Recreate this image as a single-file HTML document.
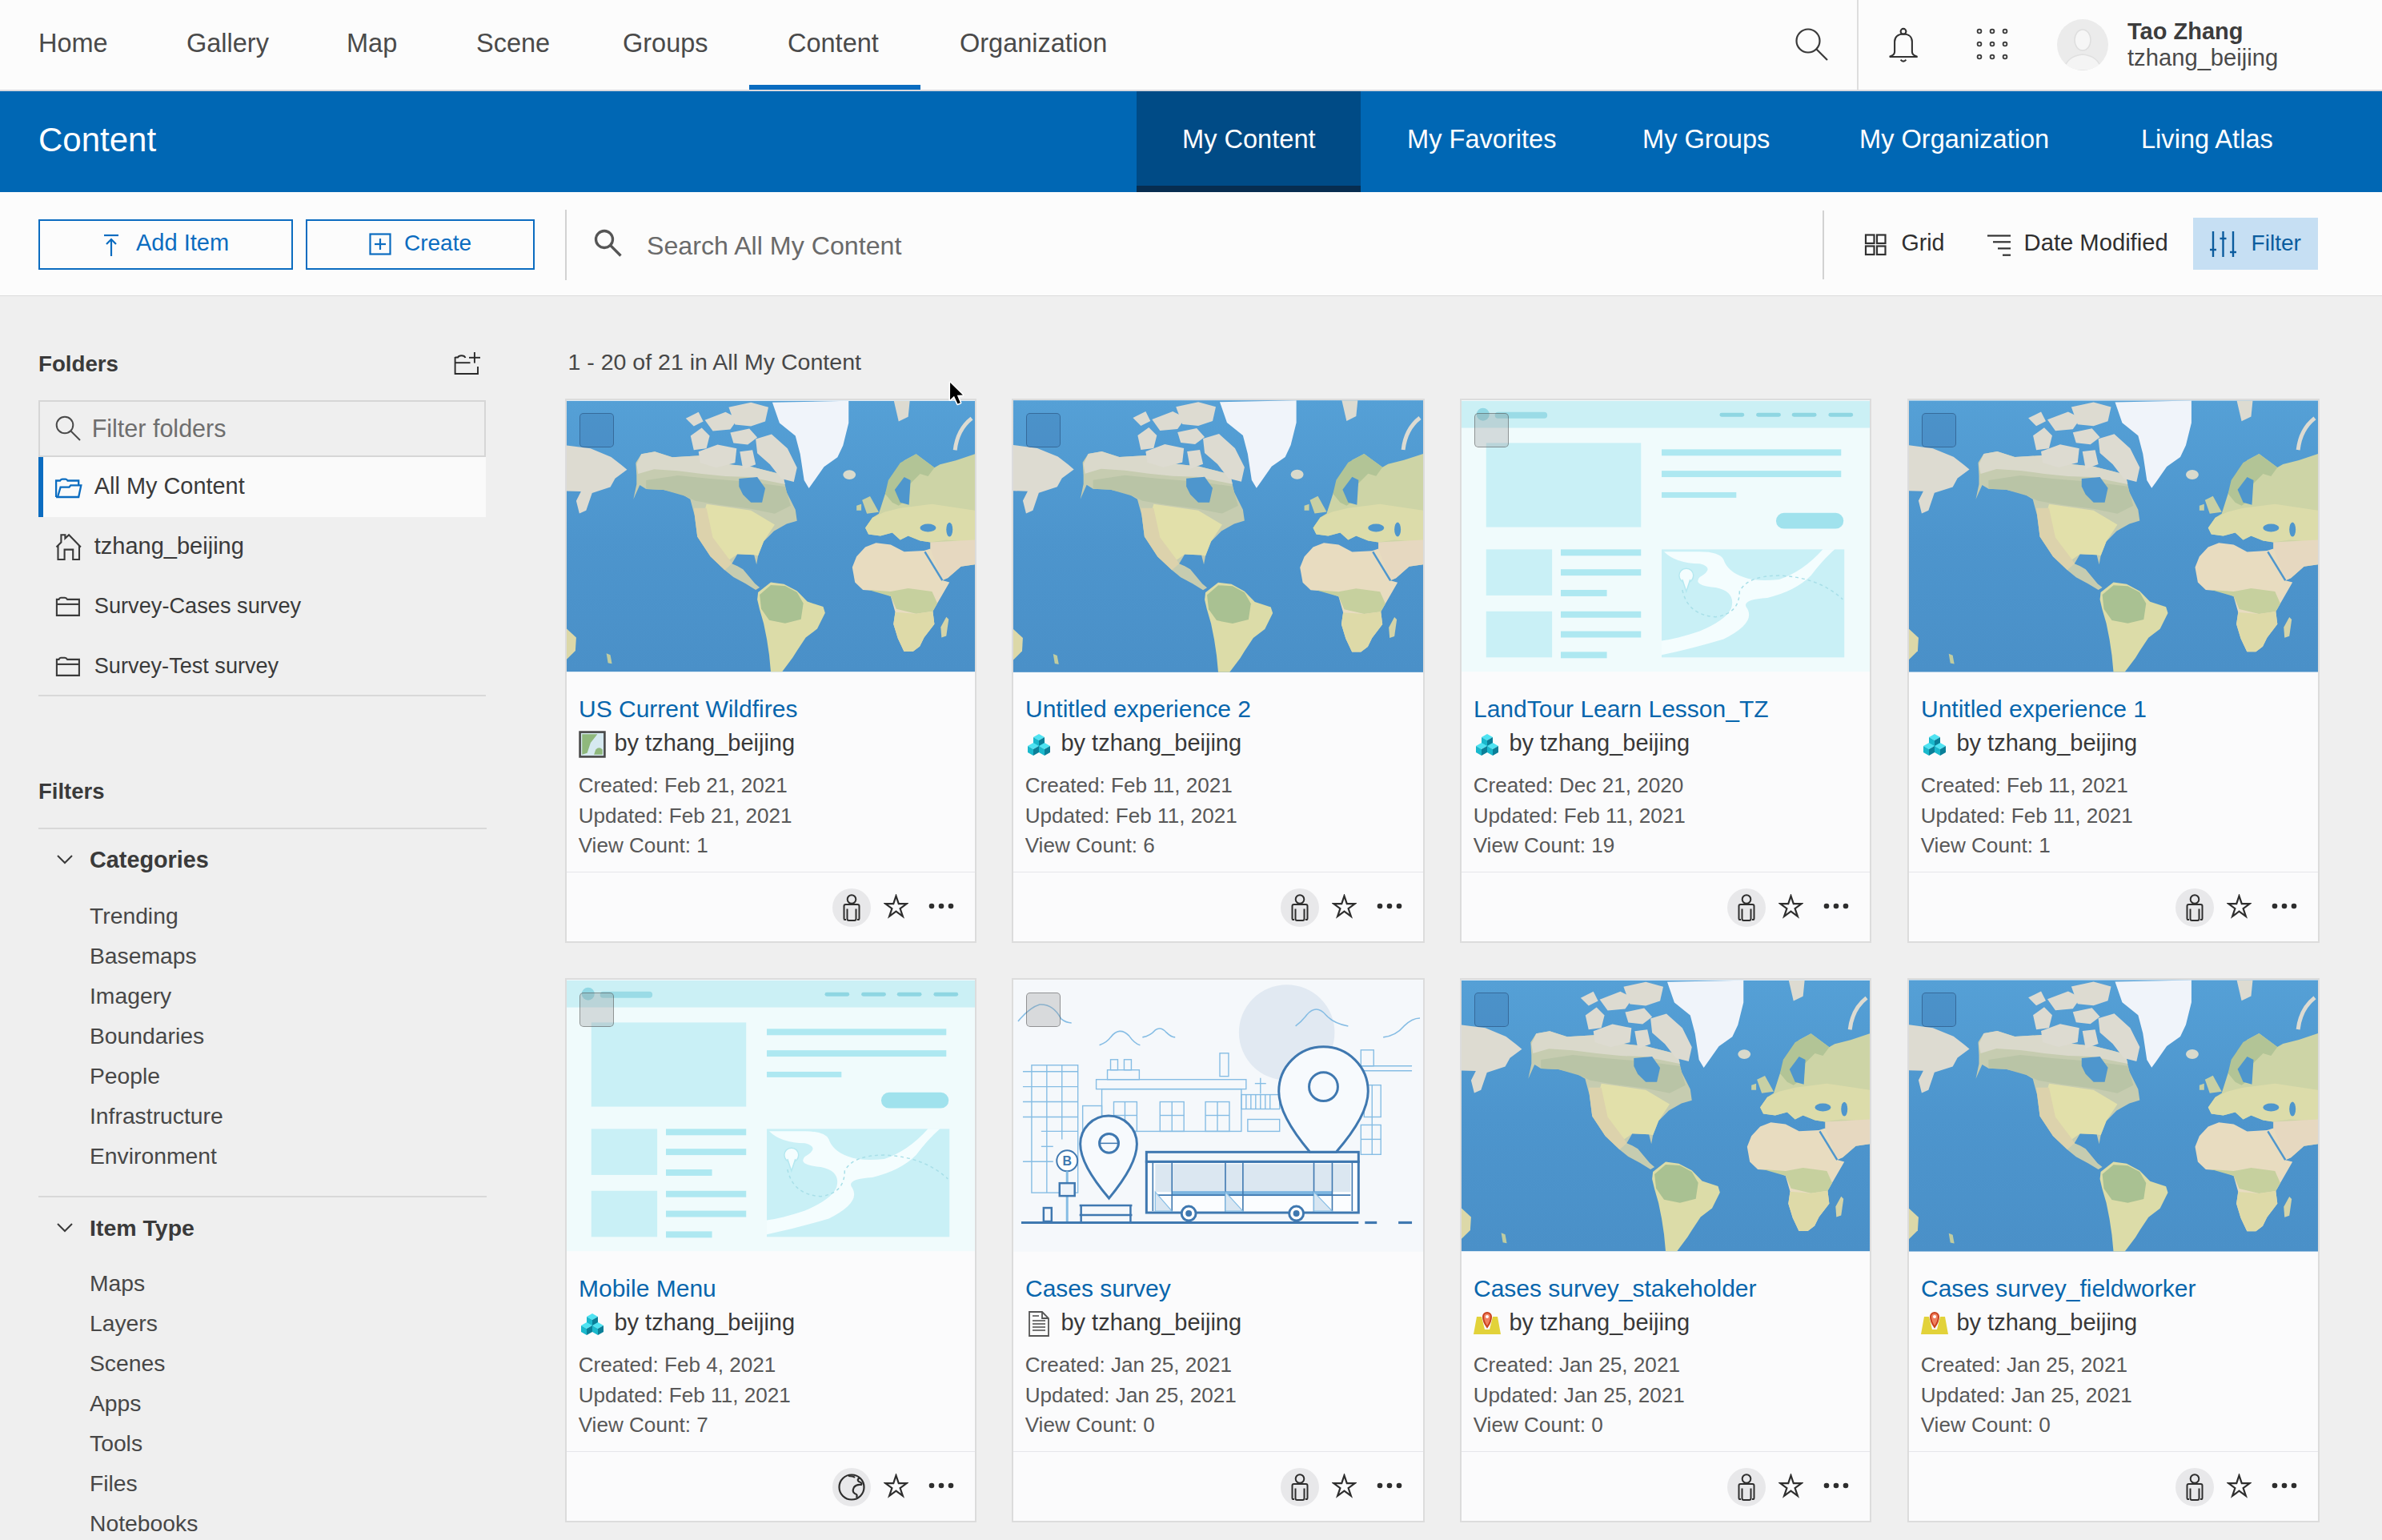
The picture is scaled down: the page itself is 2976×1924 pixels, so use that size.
<!DOCTYPE html>
<html><head><meta charset="utf-8"><style>
html,body{margin:0;padding:0}
body{width:2976px;height:1924px;overflow:hidden;position:relative;background:#efefef;font-family:"Liberation Sans", sans-serif}
.t{position:absolute;white-space:nowrap;line-height:1}
svg{overflow:visible}
</style></head><body>
<svg width="0" height="0" style="position:absolute"><defs>
<symbol id="world" viewBox="0 0 514 341">
<defs><linearGradient id="oc" x1="0" y1="0" x2="0" y2="1"><stop offset="0" stop-color="#55a0d6"/><stop offset="0.5" stop-color="#4d95cd"/><stop offset="1" stop-color="#4a90c8"/></linearGradient></defs><rect width="514" height="341" fill="url(#oc)"/>
<polygon fill="#c6ccb0" points="87,78 94,67 111,64 133,71 167,69 178,73 205,80 233,83 257,89 272,93 277,115 288,137 290,151 277,155 261,164 248,177 241,195 239,206 236,194 215,193 208,205 215,208 222,212 237,230 243,235 238,238 225,230 210,222 199,213 181,196 164.5,171 161,144 155.6,124 144,117 122,112 100,111 92,106 84,124 88,105 88,94"/>
<polygon fill="#dad9cb" points="94,67 111,64 133,71 167,69 178,73 205,80 233,83 257,89 272,93 275,105 250,100 230,96 200,95 170,92 140,88 110,86 90,92 88,80"/>
<polygon fill="#b9c4a6" points="100,100 140,94 180,98 230,102 275,108 282,132 262,142 232,136 192,131 162,126 150,120 122,112 100,111"/>
<polygon fill="#e2e0aa" points="176,130 232,138 262,156 248,177 241,195 236,194 215,193 205,200 186,185 170,152"/>
<polygon fill="#dcd2ac" points="160,135 176,135 184,172 205,200 208,205 199,213 181,196 164.5,171"/>
<polygon fill="#4e96cd" points="217,98 240,96 250,110 246,128 232,128 222,118 217,108"/>
<g fill="#dddbd1">
<polygon points="156,44 170,34 180,44 176,60 160,62"/>
<polygon points="166,64 190,55 214,60 212,78 188,84 168,78"/>
<polygon points="174,24 200,14 216,22 206,36 184,38"/>
<polygon points="204,8 232,2 254,8 250,26 232,32 212,30"/>
<polygon points="206,40 230,35 240,46 228,55 210,53"/>
<polygon points="238,48 258,42 278,60 290,84 286,102 270,98 256,80 240,66"/>
<polygon points="218,64 234,62 238,80 222,86"/>
<polygon points="150,22 166,14 172,26 160,32"/>
<polygon points="0,56 30,60 56,70.6 68.7,80.5 76,86.6 61,97.6 55,108.6 32,116 24.5,138 16,141.8 12,125.8 18,114 0,113.5"/>
<polygon points="412,0 432,0 430,20 418,26"/>
</g>
<path d="M510 22 Q492 36 489 62" fill="none" stroke="#dddbd1" stroke-width="5"/>
<polygon fill="#f0f4fa" points="259,2 355,0 355,28 348,56 341,71 324,83 310,103 305,110 299,100 294,67 288,44 268,28"/>
<ellipse cx="356" cy="93" rx="8" ry="6" fill="#d9dacc"/>
<polygon fill="#cdd4a6" points="514,206 496.5,208.5 480,223 473,226 458,190 458,178 445,176 430,170 420,175 410,166 395,170 380,168 376,160 385,147 393,142 401,117 410,95 425,75 440,67 463,84 470,80 490,75 514,67"/>
<polygon fill="#b2c496" points="401,117 405,100 420,78 440,67 463,84 455,95 445,92 432,105 428,125 418,132 410,128"/>
<polygon fill="#4e96cd" points="413,112 425,96 433,100 431,131 420,128"/>
<polygon fill="#dcdcaa" points="385,147 400,140 420,135 460,130 514,138 514,178 478,175 458,178 445,176 430,170 420,175 410,166 395,170 380,168 376,160"/>
<polygon fill="#e6d8c0" points="458,178 514,175 514,206 496.5,208.5 480,223 473,226 458,190"/>
<ellipse cx="455" cy="160" rx="10" ry="5" fill="#4e96cd"/>
<ellipse cx="482" cy="162" rx="4" ry="9" fill="#4e96cd"/>
<polygon fill="#c8d0a4" points="372,125 382,120 393,140 378,142"/>
<polygon fill="#c8d0a4" points="365,132 371,130 371,138 365,138"/>
<polygon fill="#e8dcc0" points="359.6,209.6 365,196 376,184 389.5,178.7 408,181 425,190 450,188.7 458,186 473,226 482,228.4 466.7,255 461,265 463,281 450,298 444.6,309 436,315.6 424.8,315.6 417,299 411.5,281 413.7,266 408,246 391.7,239.4 373,238 363,228.4"/>
<polygon fill="#c6d09e" points="380,238 408,240 430,236 460,240 466.7,255 461,265 440,268 415,262 408,246"/>
<polygon fill="#dedaa8" points="413.7,266 440,268 461,265 463,281 450,298 444.6,309 436,315.6 424.8,315.6 417,299 411.5,281"/>
<line x1="451" y1="190" x2="473" y2="226" stroke="#4e96cd" stroke-width="2.5"/>
<polygon fill="#d4d4a8" points="471,285 478,272 481,275 478,296 472,298"/>
<polygon fill="#dcdca8" points="241,241 257,228.4 273.6,230.6 290,239.4 303,252.7 323,259.3 325.4,267 315.5,287 301,298 290,314.5 284.6,323.3 271.3,341 257,341 255,320 252,300 248,280 242.8,262 240,250"/>
<polygon fill="#a9c192" points="243,244 257,232 275,233 290,241 298,255 295,275 275,280 255,276 245,262"/>
<polygon fill="#dcd8a8" points="0,287 12,298 11,314.5 0,325.5"/>
<polygon fill="#c0cca0" points="50,318 55,320 57,331 52,330"/>
</symbol>

<symbol id="exp" viewBox="0 0 514 341">
<rect width="514" height="341" fill="#f0fbfc"/>
<rect width="514" height="34" fill="#cbf0f5"/>
<circle cx="27" cy="17" r="8" fill="#92d8e4"/>
<rect x="42" y="14" width="66" height="8" rx="4" fill="#9adbe6"/>
<g fill="#8fd6e2"><rect x="325" y="15" width="31" height="5" rx="2.5"/><rect x="371" y="15" width="31" height="5" rx="2.5"/><rect x="416" y="15" width="31" height="5" rx="2.5"/><rect x="462" y="15" width="31" height="5" rx="2.5"/></g>
<g fill="#c9f0f6"><rect x="31" y="53" width="195" height="106"/><rect x="31" y="187" width="83" height="58"/><rect x="31" y="265" width="83" height="58"/><rect x="252" y="187" width="230" height="136"/></g>
<g fill="#aee8f1"><rect x="252" y="61" width="226" height="8"/><rect x="252" y="88" width="226" height="8"/><rect x="252" y="115" width="94" height="7"/>
<rect x="125" y="187" width="101" height="8"/><rect x="125" y="212" width="101" height="8"/><rect x="125" y="238" width="58" height="8"/><rect x="125" y="265" width="101" height="8"/><rect x="125" y="290" width="101" height="8"/><rect x="125" y="316" width="58" height="8"/></g>
<rect x="396" y="141" width="85" height="20" rx="10" fill="#a0e2ed"/>
<path d="M255 190 Q270 205 300 205 Q320 210 300 222 Q290 232 320 235 Q345 240 340 260 Q335 275 300 290 Q270 300 252 302 L252 320 Q290 312 330 300 Q370 280 360 262 Q350 250 385 248 Q420 240 440 220 Q455 200 470 187 L455 187 Q430 215 400 225 Q370 228 355 222 Q335 215 330 200 Q325 190 300 190 Z" fill="#f4fdfe"/>
<circle cx="283" cy="220" r="9" fill="#f4fdfe" stroke="#b4e8f0" stroke-width="1.5"/>
<path d="M278 225 L283 240 L288 225" fill="#f4fdfe" stroke="#b4e8f0" stroke-width="1.5"/>
<path d="M278 238 Q285 270 320 272 Q350 268 350 240 Q360 220 400 220 Q450 222 480 250" fill="none" stroke="#a8dfe8" stroke-width="1.5" stroke-dasharray="4 4"/>
</symbol>

<symbol id="surv" viewBox="0 0 514 341">
<rect width="514" height="341" fill="#f5f8fb"/>
<circle cx="343" cy="66" r="60" fill="#e1e9f2"/>
<g fill="none" stroke="#86bde4" stroke-width="1.6">
<path d="M6 52 Q20 35 33 31 Q50 30 60 49 Q66 54 73 54"/>
<path d="M108 82 Q118 78 122 72 Q133 58 145 70 Q152 80 159 82"/>
<path d="M162 72 Q172 70 178 63 Q185 58 192 66 Q198 72 203 72"/>
<path d="M354 58 Q362 52 368 44 Q380 30 392 44 Q402 55 420 58"/>
<path d="M464 72 Q480 70 490 58 Q500 48 510 48"/>
</g>
<g fill="none" stroke="#86bde4" stroke-width="1.4">
<rect x="23" y="107" width="58" height="160"/>
<line x1="42" y1="107" x2="42" y2="267"/><line x1="61" y1="107" x2="61" y2="200"/>
<line x1="12" y1="115" x2="81" y2="115"/><line x1="12" y1="134" x2="81" y2="134"/><line x1="12" y1="153" x2="81" y2="153"/><line x1="12" y1="172" x2="81" y2="172"/><line x1="35" y1="190" x2="81" y2="190"/><line x1="35" y1="209" x2="50" y2="209"/><line x1="12" y1="228" x2="50" y2="228"/>
<rect x="104" y="125" width="188" height="12"/>
<rect x="111" y="137" width="175" height="53"/>
<rect x="118" y="113" width="40" height="12"/>
<rect x="126" y="153" width="29" height="37"/><rect x="184" y="153" width="30" height="37"/><rect x="241" y="153" width="30" height="37"/>
<line x1="140" y1="153" x2="140" y2="190"/><line x1="199" y1="153" x2="199" y2="190"/><line x1="256" y1="153" x2="256" y2="190"/>
<line x1="126" y1="170" x2="155" y2="170"/><line x1="184" y1="170" x2="214" y2="170"/><line x1="241" y1="170" x2="271" y2="170"/>
<rect x="122" y="100" width="9" height="13"/><rect x="139" y="100" width="9" height="13"/><rect x="259" y="92" width="11" height="29"/>
<rect x="87" y="158" width="24" height="32"/>
<rect x="286" y="144" width="48" height="18"/><line x1="292" y1="144" x2="292" y2="162"/><line x1="298" y1="144" x2="298" y2="162"/><line x1="304" y1="144" x2="304" y2="162"/><line x1="310" y1="144" x2="310" y2="162"/><line x1="316" y1="144" x2="316" y2="162"/><line x1="322" y1="144" x2="322" y2="162"/>
<rect x="294" y="175" width="40" height="15"/><line x1="310" y1="123" x2="310" y2="143"/><line x1="303" y1="130" x2="317" y2="130"/>
<rect x="436" y="88" width="16" height="20"/><line x1="436" y1="108" x2="500" y2="108"/><line x1="436" y1="114" x2="500" y2="114"/>
<rect x="440" y="132" width="21" height="40"/><rect x="436" y="182" width="25" height="37"/><line x1="450" y1="132" x2="450" y2="219"/><line x1="436" y1="200" x2="461" y2="200"/>
</g>
<rect x="167" y="228" width="266" height="64" fill="#fbfdff" stroke="#3f78b0" stroke-width="3"/>
<rect x="178" y="231" width="245" height="35" fill="#dbe7f1"/><rect x="199" y="265" width="201" height="6" fill="#7db5e0"/>
<rect x="167" y="216" width="266" height="12" fill="#f4f8fb" stroke="#3f78b0" stroke-width="3"/>
<g stroke="#3f78b0" stroke-width="1.6" fill="none"><line x1="199" y1="228" x2="199" y2="292"/><line x1="266" y1="228" x2="266" y2="292"/><line x1="288" y1="228" x2="288" y2="292"/><line x1="377" y1="228" x2="377" y2="292"/><line x1="400" y1="228" x2="400" y2="292"/><line x1="178" y1="270" x2="423" y2="270"/><line x1="175" y1="228" x2="175" y2="290"/><line x1="425" y1="228" x2="425" y2="290"/></g>
<g fill="#d8e6f2" stroke="#86bde4" stroke-width="1.2"><path d="M178 266 L199 290 L178 290 Z"/><path d="M266 266 L288 290 L266 290 Z"/><path d="M377 266 L400 290 L377 290 Z"/></g>
<g fill="#fff" stroke="#3f78b0" stroke-width="3"><circle cx="220" cy="293" r="9"/><circle cx="355" cy="293" r="9"/></g>
<g fill="#3f78b0"><circle cx="220" cy="293" r="4"/><circle cx="355" cy="293" r="4"/></g>
<path d="M333 140 A56 56 0 0 1 445 140 Q445 170 405 216 L372 216 Q333 170 333 140 Z" fill="#f7fafd" stroke="#3f78b0" stroke-width="3"/>
<circle cx="389" cy="134" r="18" fill="#f7fafd" stroke="#3f78b0" stroke-width="3"/>
<path d="M84 206 A35.5 35.5 0 0 1 155 206 Q155 232 120 274 Q84 232 84 206 Z" fill="#f7fafd" stroke="#3f78b0" stroke-width="3"/>
<circle cx="120" cy="205" r="12" fill="#f7fafd" stroke="#3f78b0" stroke-width="3"/>
<line x1="108" y1="205" x2="132" y2="205" stroke="#3f78b0" stroke-width="1.5"/>
<circle cx="67.5" cy="227" r="13" fill="#fff" stroke="#3f78b0" stroke-width="2"/>
<text x="67.5" y="233" font-family="Liberation Sans" font-weight="bold" font-size="16" fill="#3f78b0" text-anchor="middle">B</text>
<line x1="67.5" y1="240" x2="67.5" y2="303" stroke="#86bde4" stroke-width="3"/>
<rect x="58" y="255" width="19" height="16" fill="#eef4fa" stroke="#3f78b0" stroke-width="2.5"/>
<g stroke="#3f78b0" stroke-width="2.5"><line x1="83" y1="283" x2="149" y2="283"/><line x1="83" y1="295" x2="149" y2="295"/><line x1="85" y1="283" x2="85" y2="303"/><line x1="147" y1="283" x2="147" y2="303"/></g>
<rect x="38" y="286" width="10" height="17" fill="none" stroke="#3f78b0" stroke-width="2.5"/>
<line x1="10" y1="304.5" x2="433" y2="304.5" stroke="#3f78b0" stroke-width="3.2"/>
<g stroke="#3f78b0" stroke-width="3.2"><line x1="441" y1="304.5" x2="456" y2="304.5"/><line x1="483" y1="304.5" x2="500" y2="304.5"/></g>
</symbol>
<symbol id="mapicon" viewBox="0 0 32 32"><rect x="1.5" y="1.5" width="29" height="29" fill="#d6e9f0" stroke="#4a4a4a" stroke-width="2.5"/><path d="M4 4 L22 4 L14 14 L10 26 L4 28 Z" fill="#8fb87c"/><path d="M20 22 Q24 18 28 22 L28 28 L18 28 Z" fill="#8fb87c"/></symbol><symbol id="cubes" viewBox="0 0 34 34">
<g><path d="M10 8 L17 4 L24 8 L17 12 Z" fill="#4fe3f2"/><path d="M10 8 L17 12 L17 20 L10 16 Z" fill="#1ab8cc"/><path d="M24 8 L17 12 L17 20 L24 16 Z" fill="#0a7f98"/></g>
<g transform="translate(-7 11)"><path d="M10 8 L17 4 L24 8 L17 12 Z" fill="#4fe3f2"/><path d="M10 8 L17 12 L17 20 L10 16 Z" fill="#1ab8cc"/><path d="M24 8 L17 12 L17 20 L24 16 Z" fill="#0a7f98"/></g>
<g transform="translate(7 11)"><path d="M10 8 L17 4 L24 8 L17 12 Z" fill="#4fe3f2"/><path d="M10 8 L17 12 L17 20 L10 16 Z" fill="#1ab8cc"/><path d="M24 8 L17 12 L17 20 L24 16 Z" fill="#0a7f98"/></g>
</symbol><symbol id="doc" viewBox="0 0 34 34"><path d="M5 2 L21 2 L29 10 L29 32 L5 32 Z" fill="#fafafa" stroke="#555" stroke-width="1.8"/><path d="M21 2 L21 10 L29 10" fill="none" stroke="#555" stroke-width="1.8"/><g stroke="#555" stroke-width="1.6"><line x1="9" y1="13" x2="25" y2="13"/><line x1="9" y1="17" x2="25" y2="17"/><line x1="9" y1="21" x2="25" y2="21"/><line x1="9" y1="25" x2="25" y2="25"/><line x1="9" y1="7" x2="17" y2="7"/></g></symbol><symbol id="survicon" viewBox="0 0 34 34"><path d="M4 8 L10 8 L14 24 L20 24 L24 8 L30 8 L34 30 L0 30 Z" fill="#e2d23a"/><path d="M12 8 A5 5 0 0 1 22 8 Q22 14 17 21 Q12 14 12 8 Z" fill="#f08060" stroke="#c8401c" stroke-width="2"/><circle cx="17" cy="8" r="2" fill="#fff"/></symbol><symbol id="person" viewBox="0 0 48 48"><circle cx="24" cy="24" r="24" fill="#e8e8ea"/><g fill="none" stroke="#2e2e2e" stroke-width="2"><circle cx="24" cy="13.5" r="5.3"/><path d="M17 39 L15.5 39 Q14.5 39 14.5 37.5 L14.5 22 Q14.5 20 16.5 20 L31.5 20 Q33.5 20 33.5 22 L33.5 37.5 Q33.5 39 32.5 39 L31 39"/><path d="M18.5 25.5 L18.5 38 Q18.5 40 20.5 40 L27.5 40 Q29.5 40 29.5 38 L29.5 25.5"/></g></symbol><symbol id="globe" viewBox="0 0 48 48"><circle cx="24" cy="24" r="24" fill="#e8e8ea"/><g fill="none" stroke="#2e2e2e" stroke-width="2.2"><circle cx="24" cy="24" r="15.5"/><path d="M34 12 Q30 15 33 17 Q38 19 36 21 Q30 20 27 24 Q24 30 28 32 Q32 33 30 37"/><path d="M20 10 Q26 10 28 12"/></g></symbol><symbol id="star" viewBox="0 0 34 34"><path d="M17 2.5 L20.6 13.2 L31.6 13.2 L22.6 19.8 L26.2 30.5 L17 23.8 L7.8 30.5 L11.4 19.8 L2.4 13.2 L13.4 13.2 Z" fill="none" stroke="#2e2e2e" stroke-width="2.4" stroke-linejoin="miter"/></symbol></defs></svg>
<div style="position:absolute;left:0px;top:0px;width:2976px;height:112px;background:#fcfcfc"></div>
<div style="position:absolute;left:0px;top:112px;width:2976px;height:2px;background:#d9d9de"></div>
<div class="t" style="left:48.0px;top:38.4px;font-size:32.5px;color:#4a4a4a;font-weight:normal;">Home</div>
<div class="t" style="left:233.0px;top:38.4px;font-size:32.5px;color:#4a4a4a;font-weight:normal;">Gallery</div>
<div class="t" style="left:433.0px;top:38.4px;font-size:32.5px;color:#4a4a4a;font-weight:normal;">Map</div>
<div class="t" style="left:595.0px;top:38.4px;font-size:32.5px;color:#4a4a4a;font-weight:normal;">Scene</div>
<div class="t" style="left:778.0px;top:38.4px;font-size:32.5px;color:#4a4a4a;font-weight:normal;">Groups</div>
<div class="t" style="left:984.0px;top:38.4px;font-size:32.5px;color:#4a4a4a;font-weight:normal;">Content</div>
<div class="t" style="left:1199.0px;top:38.4px;font-size:32.5px;color:#4a4a4a;font-weight:normal;">Organization</div>
<div style="position:absolute;left:936px;top:106px;width:214px;height:6px;background:#0a6cc0"></div>
<div style="position:absolute;left:2320px;top:0px;width:2px;height:112px;background:#dedede"></div>
<svg style="position:absolute;left:2240px;top:32px;" width="48" height="48" viewBox="0 0 48 48"><circle cx="19" cy="19" r="14.5" fill="none" stroke="#3a3a3a" stroke-width="2.2"/><line x1="29.5" y1="29.5" x2="43" y2="43" stroke="#3a3a3a" stroke-width="2.2"/></svg>
<svg style="position:absolute;left:2356px;top:32px;" width="44" height="50" viewBox="0 0 44 50"><g fill="none" stroke="#333" stroke-width="2.1"><circle cx="22" cy="7.3" r="3.4"/><path d="M4.7 39 L39.7 39"/><path d="M4.7 38.7 Q11.1 37 11.1 32.7 L11.1 20 C11.1 14 15.5 10.5 22 10.5 C28.5 10.5 32.9 14 32.9 20 L32.9 32.7 Q32.9 37 39.3 38.7"/><path d="M18.6 42.6 Q22 46.6 25.4 42.6"/></g></svg>
<svg style="position:absolute;left:2468px;top:33px;" width="42" height="42" viewBox="0 0 42 42"><circle cx="5" cy="6" r="2.4" fill="none" stroke="#3a3a3a" stroke-width="1.8"/><circle cx="5" cy="22" r="2.4" fill="none" stroke="#3a3a3a" stroke-width="1.8"/><circle cx="5" cy="38" r="2.4" fill="none" stroke="#3a3a3a" stroke-width="1.8"/><circle cx="21" cy="6" r="2.4" fill="none" stroke="#3a3a3a" stroke-width="1.8"/><circle cx="21" cy="22" r="2.4" fill="none" stroke="#3a3a3a" stroke-width="1.8"/><circle cx="21" cy="38" r="2.4" fill="none" stroke="#3a3a3a" stroke-width="1.8"/><circle cx="37" cy="6" r="2.4" fill="none" stroke="#3a3a3a" stroke-width="1.8"/><circle cx="37" cy="22" r="2.4" fill="none" stroke="#3a3a3a" stroke-width="1.8"/><circle cx="37" cy="38" r="2.4" fill="none" stroke="#3a3a3a" stroke-width="1.8"/></svg>
<svg style="position:absolute;left:2570px;top:24px;" width="64" height="64" viewBox="0 0 64 64"><defs><clipPath id="av"><circle cx="32" cy="32" r="32"/></clipPath></defs><circle cx="32" cy="32" r="32" fill="#ebebeb"/><g clip-path="url(#av)"><ellipse cx="32" cy="26" rx="10" ry="13" fill="#f6f6f6" stroke="#dedede" stroke-width="1.5"/><path d="M8 64 Q12 46 32 44 Q52 46 56 64 Z" fill="#f4f4f4" stroke="#e0e0e0" stroke-width="1.5"/></g></svg>
<div class="t" style="left:2658.0px;top:25.4px;font-size:29px;color:#3c3c3c;font-weight:bold;">Tao Zhang</div>
<div class="t" style="left:2658.0px;top:58.2px;font-size:29.2px;color:#4a4a4a;font-weight:normal;">tzhang_beijing</div>
<div style="position:absolute;left:0px;top:114px;width:2976px;height:126px;background:#0067b4"></div>
<div class="t" style="left:48.0px;top:154.3px;font-size:42px;color:#ffffff;font-weight:normal;">Content</div>
<div style="position:absolute;left:1420px;top:114px;width:280px;height:118px;background:#004b86"></div>
<div style="position:absolute;left:1420px;top:232px;width:280px;height:8px;background:#072d50"></div>
<div class="t" style="left:1477.0px;top:158.3px;font-size:32.6px;color:#ffffff;font-weight:normal;">My Content</div>
<div class="t" style="left:1758.0px;top:158.3px;font-size:32.6px;color:#ffffff;font-weight:normal;">My Favorites</div>
<div class="t" style="left:2052.0px;top:158.3px;font-size:32.6px;color:#ffffff;font-weight:normal;">My Groups</div>
<div class="t" style="left:2323.0px;top:158.3px;font-size:32.6px;color:#ffffff;font-weight:normal;">My Organization</div>
<div class="t" style="left:2675.0px;top:158.3px;font-size:32.6px;color:#ffffff;font-weight:normal;">Living Atlas</div>
<div style="position:absolute;left:0px;top:240px;width:2976px;height:129px;background:#fcfcfc"></div>
<div style="position:absolute;left:0px;top:369px;width:2976px;height:1px;background:#dcdcdc"></div>
<div style="position:absolute;left:48px;top:274px;width:318px;height:63px;box-sizing:border-box;border:2.5px solid #0b6cc0"></div>
<div style="position:absolute;left:382px;top:274px;width:286px;height:63px;box-sizing:border-box;border:2.5px solid #0b6cc0"></div>
<svg style="position:absolute;left:126px;top:290px;" width="26" height="32" viewBox="0 0 26 32"><line x1="4" y1="4" x2="22" y2="4" stroke="#0b6cc0" stroke-width="2.2"/><line x1="13" y1="9" x2="13" y2="30" stroke="#0b6cc0" stroke-width="2.2"/><path d="M7 15 L13 9 L19 15" fill="none" stroke="#0b6cc0" stroke-width="2.2"/></svg>
<div class="t" style="left:170.0px;top:289.4px;font-size:29px;color:#0b6cc0;font-weight:normal;">Add Item</div>
<svg style="position:absolute;left:460px;top:290px;" width="30" height="30" viewBox="0 0 30 30"><rect x="2.5" y="2.5" width="25" height="25" fill="none" stroke="#0b6cc0" stroke-width="2.2"/><line x1="15" y1="8" x2="15" y2="22" stroke="#0b6cc0" stroke-width="2.2"/><line x1="8" y1="15" x2="22" y2="15" stroke="#0b6cc0" stroke-width="2.2"/></svg>
<div class="t" style="left:505.0px;top:290.2px;font-size:28px;color:#0b6cc0;font-weight:normal;">Create</div>
<div style="position:absolute;left:706px;top:262px;width:2px;height:88px;background:#d2d2d2"></div>
<svg style="position:absolute;left:740px;top:284px;" width="40" height="40" viewBox="0 0 40 40"><circle cx="15" cy="15" r="10.5" fill="none" stroke="#555" stroke-width="3.3"/><line x1="22.5" y1="22.5" x2="35.5" y2="35.5" stroke="#555" stroke-width="3.3"/></svg>
<div class="t" style="left:808.0px;top:290.6px;font-size:32.2px;color:#6a6a6a;font-weight:normal;">Search All My Content</div>
<div style="position:absolute;left:2277px;top:263px;width:2px;height:86px;background:#d2d2d2"></div>
<svg style="position:absolute;left:2328px;top:291px;" width="32" height="30" viewBox="0 0 32 30"><rect x="3" y="2.5" width="10.5" height="10.5" fill="none" stroke="#323232" stroke-width="2.2"/><rect x="3" y="16.5" width="10.5" height="10.5" fill="none" stroke="#323232" stroke-width="2.2"/><rect x="17" y="2.5" width="10.5" height="10.5" fill="none" stroke="#323232" stroke-width="2.2"/><rect x="17" y="16.5" width="10.5" height="10.5" fill="none" stroke="#323232" stroke-width="2.2"/></svg>
<div class="t" style="left:2375.5px;top:289.1px;font-size:28.6px;color:#2f2f2f;font-weight:normal;">Grid</div>
<svg style="position:absolute;left:2482px;top:290px;" width="32" height="32" viewBox="0 0 32 32"><g stroke="#323232" stroke-width="2.2"><line x1="1" y1="4.5" x2="30" y2="4.5"/><line x1="8" y1="12.3" x2="30" y2="12.3"/><line x1="14" y1="20.4" x2="30" y2="20.4"/><line x1="20" y1="28.7" x2="30" y2="28.7"/></g></svg>
<div class="t" style="left:2528.6px;top:288.6px;font-size:29.2px;color:#2f2f2f;font-weight:normal;">Date Modified</div>
<div style="position:absolute;left:2740px;top:272px;width:156px;height:65px;background:#c6dff3"></div>
<svg style="position:absolute;left:2758px;top:286px;" width="40" height="38" viewBox="0 0 40 38"><g stroke="#0b5c9e" stroke-width="2.4"><line x1="7" y1="3" x2="7" y2="35"/><line x1="19.5" y1="3" x2="19.5" y2="35"/><line x1="32" y1="3" x2="32" y2="35"/><line x1="3" y1="26" x2="11" y2="26"/><line x1="15.5" y1="12" x2="23.5" y2="12"/><line x1="28" y1="29" x2="36" y2="29"/></g></svg>
<div class="t" style="left:2812.5px;top:289.5px;font-size:28.1px;color:#0b5c9e;font-weight:normal;">Filter</div>
<div class="t" style="left:48.0px;top:440.5px;font-size:27.7px;color:#3a3a3a;font-weight:bold;">Folders</div>
<svg style="position:absolute;left:564px;top:436px;" width="40" height="36" viewBox="0 0 40 36"><g fill="none" stroke="#2a2a2a" stroke-width="1.9"><path d="M4.6 10 L4.6 31 L33 31 L33 22"/><path d="M4.6 10.5 L8 10.5 Q9 8.3 12.5 8.3 Q16.5 8.3 17.4 11"/><line x1="4.6" y1="17.2" x2="23.5" y2="17.2"/><line x1="28.9" y1="4" x2="28.9" y2="17.6"/><line x1="22" y1="10.8" x2="36" y2="10.8"/></g></svg>
<div style="position:absolute;left:48px;top:500px;width:559px;height:71px;box-sizing:border-box;border:2px solid #d6d6d6;background:#efefef"></div>
<svg style="position:absolute;left:66px;top:516px;" width="40" height="40" viewBox="0 0 40 40"><circle cx="15" cy="15" r="10.3" fill="none" stroke="#4a4a4a" stroke-width="2"/><line x1="22.5" y1="22.5" x2="34" y2="34" stroke="#4a4a4a" stroke-width="2"/></svg>
<div class="t" style="left:114.7px;top:520.1px;font-size:30.5px;color:#6e6e6e;font-weight:normal;">Filter folders</div>
<div style="position:absolute;left:48px;top:571px;width:559px;height:75px;background:#fafafa"></div>
<div style="position:absolute;left:48px;top:571px;width:6px;height:75px;background:#0b6cc0"></div>
<svg style="position:absolute;left:68px;top:594px;" width="36" height="32" viewBox="0 0 36 32"><g fill="none" stroke="#0b6cc0" stroke-width="2.3" stroke-linejoin="miter"><path d="M2.1 27 L2.1 6.5 L7 6.5 Q8.5 4.6 10 4.6 L14 4.6 Q15.5 4.6 16.5 6.5 L30.2 6.5 L30.2 12.3"/><path d="M2.1 27 L30.2 27 L33.3 12.3 L20.3 12.3 L18.5 14.7 L7.6 14.7 L4 27"/></g></svg>
<div class="t" style="left:117.8px;top:593.4px;font-size:28.9px;color:#3a3a3a;font-weight:normal;">All My Content</div>
<svg style="position:absolute;left:68px;top:664px;" width="36" height="38" viewBox="0 0 36 38"><g fill="none" stroke="#3a3a3a" stroke-width="2.1"><path d="M2.5 19.5 L8.4 13.6 L8.4 4.3 L13.4 4.3 L13.4 8.6 L18.1 4.2 L32.9 19.5"/><path d="M4.5 17.5 L4.5 35 L12.6 35 L12.6 22.6 L23.2 22.6 L23.2 35 L31 35 L31 17.5"/></g></svg>
<div class="t" style="left:117.8px;top:667.9px;font-size:29px;color:#3a3a3a;font-weight:normal;">tzhang_beijing</div>
<svg style="position:absolute;left:68px;top:744px;" width="36" height="28" viewBox="0 0 36 28"><g fill="none" stroke="#3a3a3a" stroke-width="2.1"><path d="M2.9 24.9 L30.9 24.9 L30.9 4.9 L16.1 4.9 Q15 2.7 13 2.7 L8 2.7 Q6.4 2.7 5.5 4.9 L2.9 4.9 Z"/><line x1="2.9" y1="10.9" x2="30.9" y2="10.9"/></g></svg>
<div class="t" style="left:117.8px;top:742.9px;font-size:27.2px;color:#3a3a3a;font-weight:normal;">Survey-Cases survey</div>
<svg style="position:absolute;left:68px;top:818.5px;" width="36" height="28" viewBox="0 0 36 28"><g fill="none" stroke="#3a3a3a" stroke-width="2.1"><path d="M2.9 24.9 L30.9 24.9 L30.9 4.9 L16.1 4.9 Q15 2.7 13 2.7 L8 2.7 Q6.4 2.7 5.5 4.9 L2.9 4.9 Z"/><line x1="2.9" y1="10.9" x2="30.9" y2="10.9"/></g></svg>
<div class="t" style="left:117.8px;top:817.5px;font-size:27.1px;color:#3a3a3a;font-weight:normal;">Survey-Test survey</div>
<div style="position:absolute;left:48px;top:868px;width:559px;height:2px;background:#d8d8d8"></div>
<div class="t" style="left:48.0px;top:974.6px;font-size:27.5px;color:#3a3a3a;font-weight:bold;">Filters</div>
<div style="position:absolute;left:48px;top:1034px;width:560px;height:2px;background:#d8d8d8"></div>
<svg style="position:absolute;left:70px;top:1066px;" width="22" height="16" viewBox="0 0 22 16"><path d="M2 3 L11 12 L20 3" fill="none" stroke="#3a3a3a" stroke-width="2"/></svg>
<div class="t" style="left:112.0px;top:1059.9px;font-size:28.8px;color:#3a3a3a;font-weight:bold;">Categories</div>
<div class="t" style="left:112.0px;top:1130.4px;font-size:28.3px;color:#474747;font-weight:normal;">Trending</div>
<div class="t" style="left:112.0px;top:1180.3px;font-size:28.3px;color:#474747;font-weight:normal;">Basemaps</div>
<div class="t" style="left:112.0px;top:1230.1px;font-size:28.3px;color:#474747;font-weight:normal;">Imagery</div>
<div class="t" style="left:112.0px;top:1280.0px;font-size:28.3px;color:#474747;font-weight:normal;">Boundaries</div>
<div class="t" style="left:112.0px;top:1329.8px;font-size:28.3px;color:#474747;font-weight:normal;">People</div>
<div class="t" style="left:112.0px;top:1379.7px;font-size:28.3px;color:#474747;font-weight:normal;">Infrastructure</div>
<div class="t" style="left:112.0px;top:1429.5px;font-size:28.3px;color:#474747;font-weight:normal;">Environment</div>
<div style="position:absolute;left:48px;top:1494px;width:560px;height:2px;background:#d8d8d8"></div>
<svg style="position:absolute;left:70px;top:1526px;" width="22" height="16" viewBox="0 0 22 16"><path d="M2 3 L11 12 L20 3" fill="none" stroke="#3a3a3a" stroke-width="2"/></svg>
<div class="t" style="left:112.0px;top:1519.8px;font-size:28.5px;color:#3a3a3a;font-weight:bold;">Item Type</div>
<div class="t" style="left:112.0px;top:1589.4px;font-size:28.3px;color:#474747;font-weight:normal;">Maps</div>
<div class="t" style="left:112.0px;top:1639.4px;font-size:28.3px;color:#474747;font-weight:normal;">Layers</div>
<div class="t" style="left:112.0px;top:1689.4px;font-size:28.3px;color:#474747;font-weight:normal;">Scenes</div>
<div class="t" style="left:112.0px;top:1739.4px;font-size:28.3px;color:#474747;font-weight:normal;">Apps</div>
<div class="t" style="left:112.0px;top:1789.3px;font-size:28.3px;color:#474747;font-weight:normal;">Tools</div>
<div class="t" style="left:112.0px;top:1839.3px;font-size:28.3px;color:#474747;font-weight:normal;">Files</div>
<div class="t" style="left:112.0px;top:1889.3px;font-size:28.3px;color:#474747;font-weight:normal;">Notebooks</div>
<div class="t" style="left:709.4px;top:438.0px;font-size:28.55px;color:#474747;font-weight:normal;">1 - 20 of 21 in All My Content</div>
<div style="position:absolute;left:706px;top:498px;width:514px;height:680px;box-sizing:border-box;border:2px solid #dcdcdc;background:#fbfbfc"></div>
<svg style="position:absolute;left:708px;top:500px;display:block" width="510" height="340" viewBox="0 0 510 340"><use href="#world" x="0" y="0" width="510" height="340"/></svg>
<div style="position:absolute;left:724px;top:516px;width:43px;height:43px;box-sizing:border-box;border:1.5px solid rgba(30,60,100,0.45);border-radius:5px;background:rgba(40,90,150,0.18)"></div>
<div class="t" style="left:723.0px;top:870.5px;font-size:30px;color:#0766ad;font-weight:normal;">US Current Wildfires</div>
<svg style="position:absolute;left:723px;top:913px;" width="34" height="34" viewBox="0 0 34 34"><use href="#mapicon" width="34" height="34"/></svg>
<div class="t" style="left:767.4px;top:914.4px;font-size:29px;color:#383838;font-weight:normal;">by tzhang_beijing</div>
<div class="t" style="left:722.7px;top:967.8px;font-size:26.1px;color:#585858;font-weight:normal;">Created: Feb 21, 2021</div>
<div class="t" style="left:722.7px;top:1005.5px;font-size:26.1px;color:#585858;font-weight:normal;">Updated: Feb 21, 2021</div>
<div class="t" style="left:722.7px;top:1043.1px;font-size:26.1px;color:#585858;font-weight:normal;">View Count: 1</div>
<div style="position:absolute;left:708px;top:1089px;width:510px;height:1px;background:#e6e6ea"></div>
<svg style="position:absolute;left:1039.5px;top:1110px;" width="48" height="48" viewBox="0 0 48 48"><use href="#person" width="48" height="48"/></svg>
<svg style="position:absolute;left:1104.3px;top:1116.5px;" width="31" height="31" viewBox="0 0 31 31"><use href="#star" width="31" height="31"/></svg>
<svg style="position:absolute;left:1158px;top:1126px;" width="38" height="12" viewBox="0 0 38 12"><g fill="#2e2e2e"><circle cx="6" cy="6" r="3.3"/><circle cx="18" cy="6" r="3.3"/><circle cx="30" cy="6" r="3.3"/></g></svg>
<div style="position:absolute;left:1264px;top:498px;width:516px;height:680px;box-sizing:border-box;border:2px solid #dcdcdc;background:#fbfbfc"></div>
<svg style="position:absolute;left:1266px;top:500px;display:block" width="512" height="340" viewBox="0 0 512 340"><use href="#world" x="0" y="0" width="512" height="340"/></svg>
<div style="position:absolute;left:1282px;top:516px;width:43px;height:43px;box-sizing:border-box;border:1.5px solid rgba(30,60,100,0.45);border-radius:5px;background:rgba(40,90,150,0.18)"></div>
<div class="t" style="left:1281.0px;top:870.5px;font-size:30px;color:#0766ad;font-weight:normal;">Untitled experience 2</div>
<svg style="position:absolute;left:1281px;top:913px;" width="34" height="34" viewBox="0 0 34 34"><use href="#cubes" width="34" height="34"/></svg>
<div class="t" style="left:1325.4px;top:914.4px;font-size:29px;color:#383838;font-weight:normal;">by tzhang_beijing</div>
<div class="t" style="left:1280.7px;top:967.8px;font-size:26.1px;color:#585858;font-weight:normal;">Created: Feb 11, 2021</div>
<div class="t" style="left:1280.7px;top:1005.5px;font-size:26.1px;color:#585858;font-weight:normal;">Updated: Feb 11, 2021</div>
<div class="t" style="left:1280.7px;top:1043.1px;font-size:26.1px;color:#585858;font-weight:normal;">View Count: 6</div>
<div style="position:absolute;left:1266px;top:1089px;width:512px;height:1px;background:#e6e6ea"></div>
<svg style="position:absolute;left:1599.5px;top:1110px;" width="48" height="48" viewBox="0 0 48 48"><use href="#person" width="48" height="48"/></svg>
<svg style="position:absolute;left:1664.3px;top:1116.5px;" width="31" height="31" viewBox="0 0 31 31"><use href="#star" width="31" height="31"/></svg>
<svg style="position:absolute;left:1718px;top:1126px;" width="38" height="12" viewBox="0 0 38 12"><g fill="#2e2e2e"><circle cx="6" cy="6" r="3.3"/><circle cx="18" cy="6" r="3.3"/><circle cx="30" cy="6" r="3.3"/></g></svg>
<div style="position:absolute;left:1824px;top:498px;width:514px;height:680px;box-sizing:border-box;border:2px solid #dcdcdc;background:#fbfbfc"></div>
<svg style="position:absolute;left:1826px;top:500px;display:block" width="510" height="340" viewBox="0 0 510 340"><use href="#exp" x="0" y="0" width="510" height="340"/></svg>
<div style="position:absolute;left:1842px;top:516px;width:43px;height:43px;box-sizing:border-box;border:1.5px solid rgba(60,60,60,0.45);border-radius:5px;background:rgba(150,150,150,0.3)"></div>
<div class="t" style="left:1841.0px;top:870.5px;font-size:30px;color:#0766ad;font-weight:normal;">LandTour Learn Lesson_TZ</div>
<svg style="position:absolute;left:1841px;top:913px;" width="34" height="34" viewBox="0 0 34 34"><use href="#cubes" width="34" height="34"/></svg>
<div class="t" style="left:1885.4px;top:914.4px;font-size:29px;color:#383838;font-weight:normal;">by tzhang_beijing</div>
<div class="t" style="left:1840.7px;top:967.8px;font-size:26.1px;color:#585858;font-weight:normal;">Created: Dec 21, 2020</div>
<div class="t" style="left:1840.7px;top:1005.5px;font-size:26.1px;color:#585858;font-weight:normal;">Updated: Feb 11, 2021</div>
<div class="t" style="left:1840.7px;top:1043.1px;font-size:26.1px;color:#585858;font-weight:normal;">View Count: 19</div>
<div style="position:absolute;left:1826px;top:1089px;width:510px;height:1px;background:#e6e6ea"></div>
<svg style="position:absolute;left:2157.5px;top:1110px;" width="48" height="48" viewBox="0 0 48 48"><use href="#person" width="48" height="48"/></svg>
<svg style="position:absolute;left:2222.3px;top:1116.5px;" width="31" height="31" viewBox="0 0 31 31"><use href="#star" width="31" height="31"/></svg>
<svg style="position:absolute;left:2276px;top:1126px;" width="38" height="12" viewBox="0 0 38 12"><g fill="#2e2e2e"><circle cx="6" cy="6" r="3.3"/><circle cx="18" cy="6" r="3.3"/><circle cx="30" cy="6" r="3.3"/></g></svg>
<div style="position:absolute;left:2383px;top:498px;width:515px;height:680px;box-sizing:border-box;border:2px solid #dcdcdc;background:#fbfbfc"></div>
<svg style="position:absolute;left:2385px;top:500px;display:block" width="511" height="340" viewBox="0 0 511 340"><use href="#world" x="0" y="0" width="511" height="340"/></svg>
<div style="position:absolute;left:2401px;top:516px;width:43px;height:43px;box-sizing:border-box;border:1.5px solid rgba(30,60,100,0.45);border-radius:5px;background:rgba(40,90,150,0.18)"></div>
<div class="t" style="left:2400.0px;top:870.5px;font-size:30px;color:#0766ad;font-weight:normal;">Untitled experience 1</div>
<svg style="position:absolute;left:2400px;top:913px;" width="34" height="34" viewBox="0 0 34 34"><use href="#cubes" width="34" height="34"/></svg>
<div class="t" style="left:2444.4px;top:914.4px;font-size:29px;color:#383838;font-weight:normal;">by tzhang_beijing</div>
<div class="t" style="left:2399.7px;top:967.8px;font-size:26.1px;color:#585858;font-weight:normal;">Created: Feb 11, 2021</div>
<div class="t" style="left:2399.7px;top:1005.5px;font-size:26.1px;color:#585858;font-weight:normal;">Updated: Feb 11, 2021</div>
<div class="t" style="left:2399.7px;top:1043.1px;font-size:26.1px;color:#585858;font-weight:normal;">View Count: 1</div>
<div style="position:absolute;left:2385px;top:1089px;width:511px;height:1px;background:#e6e6ea"></div>
<svg style="position:absolute;left:2717.5px;top:1110px;" width="48" height="48" viewBox="0 0 48 48"><use href="#person" width="48" height="48"/></svg>
<svg style="position:absolute;left:2782.3px;top:1116.5px;" width="31" height="31" viewBox="0 0 31 31"><use href="#star" width="31" height="31"/></svg>
<svg style="position:absolute;left:2836px;top:1126px;" width="38" height="12" viewBox="0 0 38 12"><g fill="#2e2e2e"><circle cx="6" cy="6" r="3.3"/><circle cx="18" cy="6" r="3.3"/><circle cx="30" cy="6" r="3.3"/></g></svg>
<div style="position:absolute;left:706px;top:1222px;width:514px;height:680px;box-sizing:border-box;border:2px solid #dcdcdc;background:#fbfbfc"></div>
<svg style="position:absolute;left:708px;top:1224px;display:block" width="510" height="340" viewBox="0 0 510 340"><use href="#exp" x="0" y="0" width="510" height="340"/></svg>
<div style="position:absolute;left:724px;top:1240px;width:43px;height:43px;box-sizing:border-box;border:1.5px solid rgba(60,60,60,0.45);border-radius:5px;background:rgba(150,150,150,0.3)"></div>
<div class="t" style="left:723.0px;top:1594.5px;font-size:30px;color:#0766ad;font-weight:normal;">Mobile Menu</div>
<svg style="position:absolute;left:723px;top:1637px;" width="34" height="34" viewBox="0 0 34 34"><use href="#cubes" width="34" height="34"/></svg>
<div class="t" style="left:767.4px;top:1638.3px;font-size:29px;color:#383838;font-weight:normal;">by tzhang_beijing</div>
<div class="t" style="left:722.7px;top:1691.8px;font-size:26.1px;color:#585858;font-weight:normal;">Created: Feb 4, 2021</div>
<div class="t" style="left:722.7px;top:1729.5px;font-size:26.1px;color:#585858;font-weight:normal;">Updated: Feb 11, 2021</div>
<div class="t" style="left:722.7px;top:1767.1px;font-size:26.1px;color:#585858;font-weight:normal;">View Count: 7</div>
<div style="position:absolute;left:708px;top:1813px;width:510px;height:1px;background:#e6e6ea"></div>
<svg style="position:absolute;left:1039.5px;top:1834px;" width="48" height="48" viewBox="0 0 48 48"><use href="#globe" width="48" height="48"/></svg>
<svg style="position:absolute;left:1104.3px;top:1840.5px;" width="31" height="31" viewBox="0 0 31 31"><use href="#star" width="31" height="31"/></svg>
<svg style="position:absolute;left:1158px;top:1850px;" width="38" height="12" viewBox="0 0 38 12"><g fill="#2e2e2e"><circle cx="6" cy="6" r="3.3"/><circle cx="18" cy="6" r="3.3"/><circle cx="30" cy="6" r="3.3"/></g></svg>
<div style="position:absolute;left:1264px;top:1222px;width:516px;height:680px;box-sizing:border-box;border:2px solid #dcdcdc;background:#fbfbfc"></div>
<svg style="position:absolute;left:1266px;top:1224px;display:block" width="512" height="340" viewBox="0 0 512 340"><use href="#surv" x="0" y="0" width="512" height="340"/></svg>
<div style="position:absolute;left:1282px;top:1240px;width:43px;height:43px;box-sizing:border-box;border:1.5px solid rgba(60,60,60,0.45);border-radius:5px;background:rgba(150,150,150,0.3)"></div>
<div class="t" style="left:1281.0px;top:1594.5px;font-size:30px;color:#0766ad;font-weight:normal;">Cases survey</div>
<svg style="position:absolute;left:1281px;top:1637px;" width="34" height="34" viewBox="0 0 34 34"><use href="#doc" width="34" height="34"/></svg>
<div class="t" style="left:1325.4px;top:1638.3px;font-size:29px;color:#383838;font-weight:normal;">by tzhang_beijing</div>
<div class="t" style="left:1280.7px;top:1691.8px;font-size:26.1px;color:#585858;font-weight:normal;">Created: Jan 25, 2021</div>
<div class="t" style="left:1280.7px;top:1729.5px;font-size:26.1px;color:#585858;font-weight:normal;">Updated: Jan 25, 2021</div>
<div class="t" style="left:1280.7px;top:1767.1px;font-size:26.1px;color:#585858;font-weight:normal;">View Count: 0</div>
<div style="position:absolute;left:1266px;top:1813px;width:512px;height:1px;background:#e6e6ea"></div>
<svg style="position:absolute;left:1599.5px;top:1834px;" width="48" height="48" viewBox="0 0 48 48"><use href="#person" width="48" height="48"/></svg>
<svg style="position:absolute;left:1664.3px;top:1840.5px;" width="31" height="31" viewBox="0 0 31 31"><use href="#star" width="31" height="31"/></svg>
<svg style="position:absolute;left:1718px;top:1850px;" width="38" height="12" viewBox="0 0 38 12"><g fill="#2e2e2e"><circle cx="6" cy="6" r="3.3"/><circle cx="18" cy="6" r="3.3"/><circle cx="30" cy="6" r="3.3"/></g></svg>
<div style="position:absolute;left:1824px;top:1222px;width:514px;height:680px;box-sizing:border-box;border:2px solid #dcdcdc;background:#fbfbfc"></div>
<svg style="position:absolute;left:1826px;top:1224px;display:block" width="510" height="340" viewBox="0 0 510 340"><use href="#world" x="0" y="0" width="510" height="340"/></svg>
<div style="position:absolute;left:1842px;top:1240px;width:43px;height:43px;box-sizing:border-box;border:1.5px solid rgba(30,60,100,0.45);border-radius:5px;background:rgba(40,90,150,0.18)"></div>
<div class="t" style="left:1841.0px;top:1594.5px;font-size:30px;color:#0766ad;font-weight:normal;">Cases survey_stakeholder</div>
<svg style="position:absolute;left:1841px;top:1637px;" width="34" height="34" viewBox="0 0 34 34"><use href="#survicon" width="34" height="34"/></svg>
<div class="t" style="left:1885.4px;top:1638.3px;font-size:29px;color:#383838;font-weight:normal;">by tzhang_beijing</div>
<div class="t" style="left:1840.7px;top:1691.8px;font-size:26.1px;color:#585858;font-weight:normal;">Created: Jan 25, 2021</div>
<div class="t" style="left:1840.7px;top:1729.5px;font-size:26.1px;color:#585858;font-weight:normal;">Updated: Jan 25, 2021</div>
<div class="t" style="left:1840.7px;top:1767.1px;font-size:26.1px;color:#585858;font-weight:normal;">View Count: 0</div>
<div style="position:absolute;left:1826px;top:1813px;width:510px;height:1px;background:#e6e6ea"></div>
<svg style="position:absolute;left:2157.5px;top:1834px;" width="48" height="48" viewBox="0 0 48 48"><use href="#person" width="48" height="48"/></svg>
<svg style="position:absolute;left:2222.3px;top:1840.5px;" width="31" height="31" viewBox="0 0 31 31"><use href="#star" width="31" height="31"/></svg>
<svg style="position:absolute;left:2276px;top:1850px;" width="38" height="12" viewBox="0 0 38 12"><g fill="#2e2e2e"><circle cx="6" cy="6" r="3.3"/><circle cx="18" cy="6" r="3.3"/><circle cx="30" cy="6" r="3.3"/></g></svg>
<div style="position:absolute;left:2383px;top:1222px;width:515px;height:680px;box-sizing:border-box;border:2px solid #dcdcdc;background:#fbfbfc"></div>
<svg style="position:absolute;left:2385px;top:1224px;display:block" width="511" height="340" viewBox="0 0 511 340"><use href="#world" x="0" y="0" width="511" height="340"/></svg>
<div style="position:absolute;left:2401px;top:1240px;width:43px;height:43px;box-sizing:border-box;border:1.5px solid rgba(30,60,100,0.45);border-radius:5px;background:rgba(40,90,150,0.18)"></div>
<div class="t" style="left:2400.0px;top:1594.5px;font-size:30px;color:#0766ad;font-weight:normal;">Cases survey_fieldworker</div>
<svg style="position:absolute;left:2400px;top:1637px;" width="34" height="34" viewBox="0 0 34 34"><use href="#survicon" width="34" height="34"/></svg>
<div class="t" style="left:2444.4px;top:1638.3px;font-size:29px;color:#383838;font-weight:normal;">by tzhang_beijing</div>
<div class="t" style="left:2399.7px;top:1691.8px;font-size:26.1px;color:#585858;font-weight:normal;">Created: Jan 25, 2021</div>
<div class="t" style="left:2399.7px;top:1729.5px;font-size:26.1px;color:#585858;font-weight:normal;">Updated: Jan 25, 2021</div>
<div class="t" style="left:2399.7px;top:1767.1px;font-size:26.1px;color:#585858;font-weight:normal;">View Count: 0</div>
<div style="position:absolute;left:2385px;top:1813px;width:511px;height:1px;background:#e6e6ea"></div>
<svg style="position:absolute;left:2717.5px;top:1834px;" width="48" height="48" viewBox="0 0 48 48"><use href="#person" width="48" height="48"/></svg>
<svg style="position:absolute;left:2782.3px;top:1840.5px;" width="31" height="31" viewBox="0 0 31 31"><use href="#star" width="31" height="31"/></svg>
<svg style="position:absolute;left:2836px;top:1850px;" width="38" height="12" viewBox="0 0 38 12"><g fill="#2e2e2e"><circle cx="6" cy="6" r="3.3"/><circle cx="18" cy="6" r="3.3"/><circle cx="30" cy="6" r="3.3"/></g></svg>
<svg style="position:absolute;left:1180px;top:470px;" width="34" height="44" viewBox="0 0 34 44"><path d="M7.1 8 L7 29.5 L12 24.8 L16.5 34.6 L19.8 33.2 L15.8 23.8 L22.9 23.6 Z" fill="#fff" stroke="#fff" stroke-width="3.2" stroke-linejoin="round"/><path d="M7.1 8 L7 29.5 L12 24.8 L16.5 34.6 L19.8 33.2 L15.8 23.8 L22.9 23.6 Z" fill="#000"/></svg>
</body></html>
